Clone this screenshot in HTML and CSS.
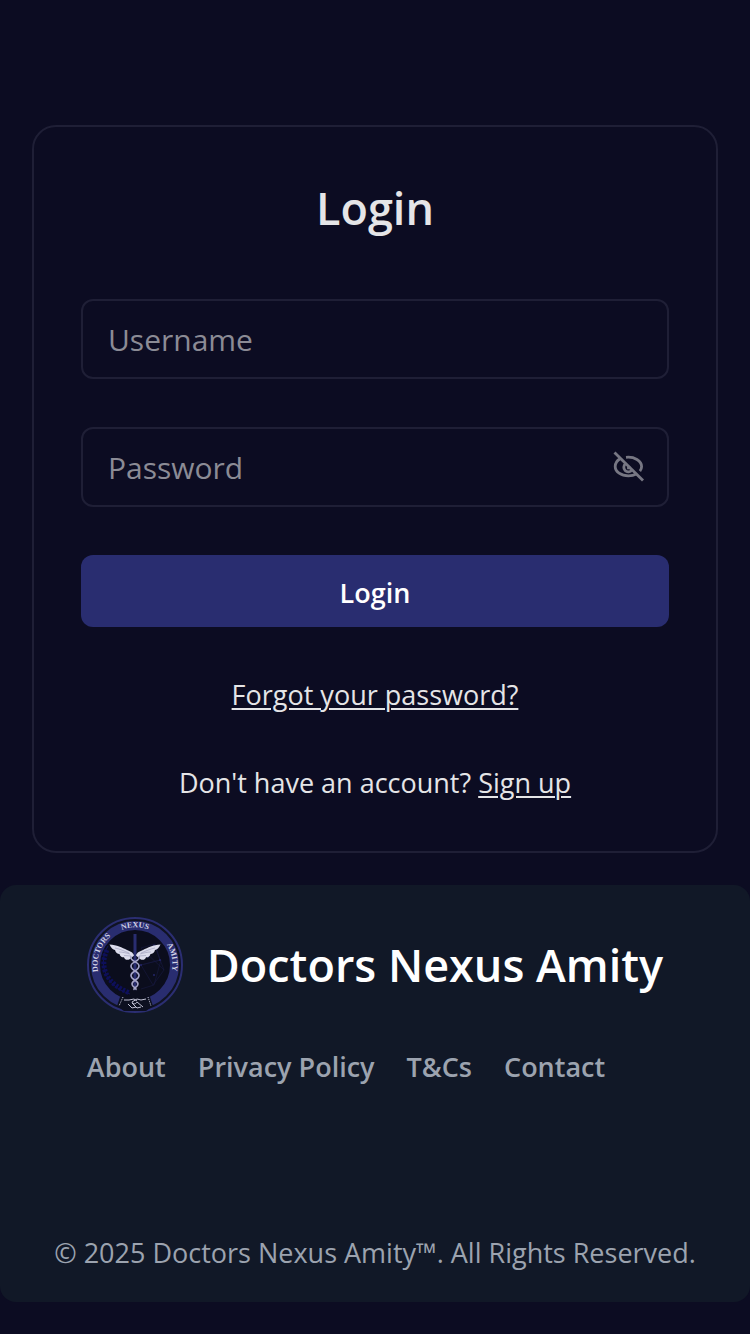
FILE: index.html
```html
<!DOCTYPE html>
<html lang="en">
<head>
<meta charset="utf-8">
<meta name="viewport" content="width=device-width, initial-scale=1">
<title>Login</title>
<link rel="stylesheet" href="styles.css">
</head>
<body>
<main class="page">
  <form class="card">
    <h1 class="card-title">Login</h1>
    <div class="fields">
      <input class="field" type="text" placeholder="Username" aria-label="Username">
      <div class="field-group">
        <input class="field field-password" type="password" placeholder="Password" aria-label="Password">
        <button class="toggle" type="button" aria-label="Show password">
          <svg viewBox="0 0 32 32" width="32" height="32" fill="none" stroke="currentColor" stroke-width="2.8">
            <path d="M2.500 1.500 31 29.500"/>
            <path d="M8 7.800C5 9.700 3.200 12.500 3.200 15.500c0 5.300 6 9.300 13.200 9.300 3 0 5.700-.6 7.900-1.800"/>
            <path d="M14 6.300c8.400-.9 15.600 3.500 15.600 9.200 0 1.700-.6 3.200-1.700 4.600"/>
            <path d="M13.600 12.700a4.500 4.500 0 1 0 6.300 6.300"/>
            <path d="M16.500 15.300v1.500h2"/>
          </svg>
        </button>
      </div>
      <button class="submit" type="submit">Login</button>
    </div>
    <p class="line"><a class="link" href="#">Forgot your password?</a></p>
    <p class="line">Don't have an account? <a class="link" href="#">Sign up</a></p>
  </form>
</main>
<footer class="footer">
  <div class="footer-main">
    <div class="brand">
      <svg class="logo" viewBox="0 0 96 96" width="96" height="96" aria-hidden="true">
        <defs>
          <path id="ring" d="M12.700 60.500A37.500 37.500 0 1 1 83.300 60.500"/>
          <g id="wing">
            <path fill="#dcdcec" d="M47 38.500c-1-3.500-4-4-7-5.500-5-2.500-10-5-17.500-5.500 1.500 3.500 3.500 5 5.500 5.500.5 2.500 2.500 4 4.500 4 .5 2.500 2.500 3.500 4.500 3.300.5 2.300 3 3.500 6 1.700z"/>
            <path fill="none" stroke="#77779c" stroke-width=".4" d="M28 31c5 1 9 3 14 5M32 35c4 0 7 1 11 2M37 38.500l7 .5"/>
          </g>
        </defs>
        <circle cx="48" cy="48" r="47" fill="#101323" stroke="#2b2e72" stroke-width="2"/>
        <circle cx="48" cy="48" r="39.500" fill="#0b0d1d" stroke="#292d70" stroke-width="9"/>
        <g fill="none" stroke="#181a42" stroke-width=".6">
          <path d="M54 31l14-4 5 16-19 5 12 20 11-15-10-26M54 48l20-5-7 25-13 4M54 31l23 22"/>
        </g>
        <g fill="#24266a"><circle cx="67" cy="29" r="1"/><circle cx="73" cy="43" r="1"/><circle cx="54" cy="48" r="1"/><circle cx="67" cy="58" r="1"/><circle cx="61" cy="40" r=".8"/></g>
        <path d="M21 29C11 45 17 69 43 77" fill="none" stroke="#11135c"/>
        <path d="M20 33C12 50 19 67 43 76" fill="none" stroke="#0d0f5a" stroke-width="5" stroke-dasharray="2.500 1.500"/>
        <path d="M46.500 17h3v52l-1.500 5-1.500-5z" fill="#292d70"/>
        <use href="#wing"/>
        <use href="#wing" transform="matrix(-1 0 0 1 96 0)"/>
        <g fill="none" stroke="#a5a5c8" stroke-width="1.600">
          <path d="M44 39c-2 6 8 5 8 10s-8 5-8 9.500 7 4.500 7 8.500-5 3-4 6"/>
          <path d="M52 39c2 6-8 5-8 10s8 5 8 9.500-7 4.500-7 8.500 5 3 4 6"/>
        </g>
        <path d="M33 80l6 1 5 1 4-1 4 1 5-1 6-1 3 9-7 5H37l-7-5z" fill="#0d1020"/>
        <g fill="none" stroke="#c2c2d5">
          <path d="M37 83l5 0M42 83l5-1 3 2M59 82l-5 1-4-1-5 3c1 3 4 2 5 0l6 5M41 87l4 4 4-1M45 86l5 5 4-1"/>
          <path d="M36 80l-4 9M61 80l3 9" stroke-dasharray="1 1"/>
        </g>
        <text class="logo-text"><textPath href="#ring" startOffset="6">DOCTORS</textPath></text>
        <text class="logo-text"><textPath href="#ring" startOffset="50%" text-anchor="middle">NEXUS</textPath></text>
        <text class="logo-text"><textPath href="#ring" startOffset="109">AMITY</textPath></text>
      </svg>
      <h2 class="brand-name">Doctors Nexus Amity</h2>
    </div>
    <nav class="nav">
      <a href="#">About</a>
      <a href="#">Privacy Policy</a>
      <a href="#">T&amp;Cs</a>
      <a href="#">Contact</a>
    </nav>
  </div>
  <p class="copyright">© 2025 Doctors Nexus Amity™. All Rights Reserved.</p>
</footer>
</body>
</html>
```
FILE: styles.css
```css
* { box-sizing: border-box; }
body {
  margin: 0;
  padding-bottom: 32px;
  background: #0c0c22;
  color: #e5e5e7;
  font-family: "Segoe UI", "Open Sans", "Noto Sans", sans-serif;
  font-size: 27px;
  line-height: 40px;
}
h1, h2, p { margin: 0; }
button, input { font-family: inherit; }
.page { padding: 125px 32px 32px; }
.card {
  display: flex;
  flex-direction: column;
  gap: 48px;
  padding: 46px 47px 48px;
  border: 2px solid #1f1f36;
  border-radius: 24px;
}
.card-title {
  font-size: 45px;
  font-weight: 600;
  line-height: 70px;
  padding-bottom: 8px;
  text-align: center;
}
.fields { display: flex; flex-direction: column; gap: 48px; }
.field {
  display: block;
  width: 100%;
  height: 80px;
  padding: 0 25px;
  border: 2px solid #1f1f36;
  border-radius: 12px;
  background: transparent;
  color: #e5e5e7;
  font-size: 30px;
}
.field::placeholder { color: #8b8b95; opacity: 1; }
.field-group { position: relative; }
.field-password { padding-right: 72px; }
.toggle {
  position: absolute;
  top: 24px;
  right: 25px;
  width: 32px;
  height: 32px;
  padding: 0;
  border: 0;
  background: none;
  color: #777783;
}
.toggle svg { display: block; }
.submit {
  height: 72px;
  padding: 2px 0 0;
  border: 0;
  border-radius: 12px;
  background: #292d70;
  color: #fff;
  font-size: 27px;
  font-weight: 600;
}
.line { text-align: center; }
.link {
  color: inherit;
  text-decoration: underline;
  text-decoration-thickness: 2px;
  text-underline-offset: 3px;
}
.footer {
  display: flex;
  flex-direction: column;
  align-items: center;
  gap: 146px;
  padding: 32px 16px 29px;
  border-radius: 16px;
  background: #111827;
  color: #9ca3af;
}
.footer-main { display: flex; flex-direction: column; gap: 34px; }
.brand { display: flex; align-items: center; gap: 24px; }
.logo { flex: none; }
.logo-text {
  fill: #d4d4e6;
  font-family: "Liberation Serif", serif;
  font-size: 8px;
  font-weight: 700;
}
.brand-name {
  color: #fff;
  font-size: 45px;
  font-weight: 600;
  line-height: 64px;
}
.nav { display: flex; flex-wrap: wrap; gap: 0 32px; font-weight: 600; }
.nav a { color: inherit; text-decoration: none; }
.copyright { text-align: center; }
```
